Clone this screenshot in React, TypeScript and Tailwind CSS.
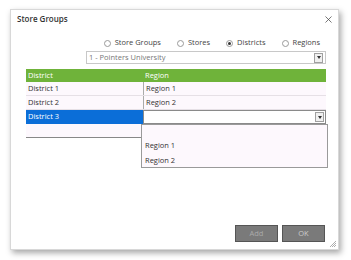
import { X } from "lucide-react";

function Radio({ label, checked }: { label: string; checked?: boolean }) {
  return (
    <div className="flex items-center gap-[4px]">
      <span className="w-[7px] h-[7px] rounded-full border border-[#9a9a9a] bg-white flex items-center justify-center">
        {checked && <span className="w-[3px] h-[3px] rounded-full bg-[#333]" />}
      </span>
      <span>{label}</span>
    </div>
  );
}

function Arrow() {
  return (
    <span className="w-[9px] h-[10px] border border-[#a0a0a0] bg-[#f0f0f0] flex items-center justify-center">
      <span className="w-0 h-0 border-l-[2.5px] border-r-[2.5px] border-t-[3px] border-l-transparent border-r-transparent border-t-[#333]" />
    </span>
  );
}

export default function App() {
  return (
    <div
      className="w-[351px] h-[260px] bg-white pt-[9px] pl-[10px]"
      style={{ fontFamily: '"Open Sans", "Noto Sans", sans-serif' }}
    >
      <div className="relative w-[329px] h-[241px] bg-white border border-[#d8d8d8] shadow-[2px_3px_6px_rgba(0,0,0,0.35)] text-[7.5px] text-[#333]">
        {/* Title bar */}
        <div className="flex items-center justify-between pl-[6px] pr-[4px] h-[18px]">
          <span className="text-[8px] font-semibold text-[#333]">Store Groups</span>
          <X className="w-[11px] h-[11px] text-[#444]" strokeWidth={1.6} />
        </div>

        {/* Radio row */}
        <div className="flex items-center justify-end gap-[16px] pr-[18px] mt-[9px] h-[12px] text-[#444]">
          <Radio label="Store Groups" />
          <Radio label="Stores" />
          <Radio label="Districts" checked />
          <Radio label="Regions" />
        </div>

        {/* Combo */}
        <div className="ml-[75px] mt-[2px] w-[240px] h-[13px] border border-[#c8c8c8] flex items-center justify-between pl-[2px] pr-[2px] text-[#777]">
          <span>1 - Pointers University</span>
          <Arrow />
        </div>

        {/* Table */}
        <div className="relative ml-[15px] mt-[5px] w-[300px]">
          <div className="grid grid-cols-[117px_183px] h-[13px] bg-[#6fb33a] text-white items-center">
            <span className="pl-[2px]">District</span>
            <span className="pl-[2px]">Region</span>
          </div>
          <div className="grid grid-cols-[117px_183px] h-[14px] bg-[#fdf8fd] border-b border-[#e6e0e6] items-center">
            <span className="pl-[2px]">District 1</span>
            <span className="pl-[2px] border-l border-[#aaa] h-full flex items-center">Region 1</span>
          </div>
          <div className="grid grid-cols-[117px_183px] h-[14px] bg-[#fdf8fd] border-b border-[#e6e0e6] items-center">
            <span className="pl-[2px]">District 2</span>
            <span className="pl-[2px] border-l border-[#aaa] h-full flex items-center">Region 2</span>
          </div>
          <div className="grid grid-cols-[117px_183px] h-[14px] bg-[#fdf8fd] items-center">
            <span className="pl-[2px] bg-[#0b6ed8] text-white h-full flex items-center">District 3</span>
            <span className="border border-[#8a8a8a] h-full bg-white flex items-center justify-end pr-[1px]">
              <Arrow />
            </span>
          </div>
          <div className="grid grid-cols-[117px_183px] h-[14px] bg-[#fdf8fd] border-b border-[#888]">
            <span />
            <span />
          </div>

          {/* Dropdown list */}
          <div className="absolute left-[115px] top-[55px] w-[187px] h-[44px] bg-[#fdf8fd] border border-[#9a9a9a] pl-[3px] pt-[15px] flex flex-col gap-[4px]">
            <span>Region 1</span>
            <span>Region 2</span>
          </div>
        </div>

        {/* Buttons */}
        <div className="absolute right-[13px] bottom-[7px] flex gap-[4px]">
          <span className="w-[43px] h-[17px] bg-[#7a7a7a] border border-[#555] flex items-center justify-center text-[#aaa]">Add</span>
          <span className="w-[43px] h-[17px] bg-[#7a7a7a] border border-[#555] flex items-center justify-center text-[#ccc]">OK</span>
        </div>

        {/* Resize grip */}
        <svg className="absolute right-[1px] bottom-[1px]" width="8" height="8" viewBox="0 0 8 8">
          <path d="M7 1 L1 7 M7 3 L3 7 M7 5 L5 7" stroke="#999" strokeWidth="0.8" />
        </svg>
      </div>
    </div>
  );
}
